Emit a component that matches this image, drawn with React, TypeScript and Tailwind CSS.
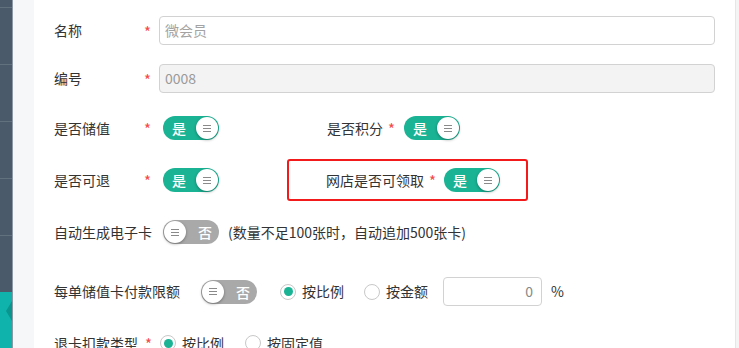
import React from 'react';

const font = { fontFamily: '"Noto Sans CJK SC", "Noto Sans", sans-serif' };

const Knob: React.FC = () => (
  <span className="flex h-[22px] w-[22px] items-center justify-center rounded-full bg-white shadow-[0_1px_3px_rgba(0,0,0,0.35)]">
    <svg width="10" height="9" viewBox="0 0 10 9">
      <path d="M1 1.5h8M1 4.5h8M1 7.5h8" stroke="#8a8a8a" strokeWidth="1.1" />
    </svg>
  </span>
);

const Toggle: React.FC<{ on: boolean }> = ({ on }) =>
  on ? (
    <span className="flex h-[24px] w-[56px] shrink-0 items-center justify-between rounded-full bg-[#1ab394] pl-[9px] pr-[1px]">
      <span className="text-[14px] font-medium leading-none text-white">是</span>
      <Knob />
    </span>
  ) : (
    <span className="flex h-[24px] w-[56px] shrink-0 items-center justify-between rounded-full bg-[#a9a9a9] pl-[1px] pr-[7px]">
      <Knob />
      <span className="text-[14px] font-medium leading-none text-white">否</span>
    </span>
  );

const Radio: React.FC<{ checked?: boolean; label: string }> = ({ checked, label }) => (
  <span className="flex items-center">
    <span className="flex h-[16px] w-[16px] items-center justify-center rounded-full border border-[#c8c8c8] bg-white">
      {checked && <span className="h-[9px] w-[9px] rounded-full bg-[#1ab394]" />}
    </span>
    <span className="ml-[6px] text-[14px] text-[#333]">{label}</span>
  </span>
);

const Star: React.FC = () => <span className="text-[15px] leading-none text-[#f54848]">*</span>;

const Label: React.FC<{ text: string; star?: boolean }> = ({ text, star }) => (
  <>
    <span className="w-[90px] shrink-0 text-[14px] text-[#333]">{text}</span>
    <span className="w-[15px] shrink-0">{star && <Star />}</span>
  </>
);

const App: React.FC = () => {
  const sideLines = [8, 57, 57, 57, 57];
  return (
    <div className="flex h-[348px] w-[739px] overflow-hidden bg-white" style={font}>
      {/* sidebar */}
      <div className="flex w-[13px] shrink-0 flex-col border-r border-[#8c98a3] bg-[#4a5a6a]">
        {sideLines.map((h, i) => (
          <div key={i} className="shrink-0 border-b border-[#62717e]" style={{ height: h }} />
        ))}
        <div className="h-[56px] shrink-0" />
        <div className="flex flex-1 items-start justify-end bg-[#0fb3ab] pt-[9px]">
          <div className="h-0 w-0 border-y-[10px] border-r-[6px] border-y-transparent border-r-[#0a968f]" />
        </div>
      </div>
      <div className="w-[21px] shrink-0 bg-[#f6f7f9]" />

      {/* form */}
      <div className="flex flex-1 flex-col pl-[20px] pr-[20px] pt-[16px]">
        <div className="flex h-[29px] items-center">
          <Label text="名称" star />
          <div className="flex h-[29px] flex-1 items-center rounded-[4px] border border-[#d2d2d2] px-[5px] text-[14px] text-[#a3a3a3]">
            微会员
          </div>
        </div>

        <div className="mt-[19px] flex h-[29px] items-center">
          <Label text="编号" star />
          <div className="flex h-[29px] flex-1 items-center rounded-[4px] border border-[#d2d2d2] bg-[#f3f3f3] px-[5px] text-[14px] text-[#9a9a9a]">
            0008
          </div>
        </div>

        <div className="mt-[23px] flex h-[24px] items-center">
          <Label text="是否储值" star />
          <span className="ml-[4px] w-[124px] shrink-0">
            <Toggle on />
          </span>
          <span className="flex items-center pl-[40px]">
            <span className="text-[14px] text-[#333]">是否积分</span>
            <span className="ml-[5px]">
              <Star />
            </span>
            <span className="ml-[9px]">
              <Toggle on />
            </span>
          </span>
        </div>

        <div className="mt-[19px] flex h-[42px] items-center">
          <Label text="是否可退" star />
          <span className="ml-[4px] w-[124px] shrink-0">
            <Toggle on />
          </span>
          <span className="flex h-[42px] w-[241px] items-center rounded-[3px] border-[2.5px] border-[#f21a1a] pl-[37px]">
            <span className="text-[14px] text-[#333]">网店是否可领取</span>
            <span className="ml-[5px]">
              <Star />
            </span>
            <span className="ml-[8px]">
              <Toggle on />
            </span>
          </span>
        </div>

        <div className="mt-[19px] flex h-[24px] items-center">
          <span className="w-[109px] shrink-0 text-[14px] text-[#333]">自动生成电子卡</span>
          <Toggle on={false} />
          <span className="ml-[9px] text-[14px] text-[#333]">(数量不足100张时，自动追加500张卡)</span>
        </div>

        <div className="mt-[33px] flex h-[29px] items-center">
          <span className="w-[147px] shrink-0 text-[14px] text-[#333]">每单储值卡付款限额</span>
          <Toggle on={false} />
          <span className="ml-[23px]">
            <Radio checked label="按比例" />
          </span>
          <span className="ml-[20px]">
            <Radio label="按金额" />
          </span>
          <div className="ml-[15px] flex h-[29px] w-[99px] items-center justify-end rounded-[4px] border border-[#d2d2d2] px-[8px] text-[14px] text-[#888]">
            0
          </div>
          <span className="ml-[9px] text-[14px] text-[#333]">%</span>
        </div>

        <div className="mt-[25px] flex h-[24px] items-center">
          <span className="w-[91px] shrink-0 text-[14px] text-[#333]">退卡扣款类型</span>
          <span className="w-[15px] shrink-0">
            <Star />
          </span>
          <Radio checked label="按比例" />
          <span className="ml-[21px]">
            <Radio label="按固定值" />
          </span>
        </div>
      </div>

      <div className="w-[4px] shrink-0 border-l border-[#e6e6e6] bg-[#f4f4f4]" />
    </div>
  );
};

export default App;
